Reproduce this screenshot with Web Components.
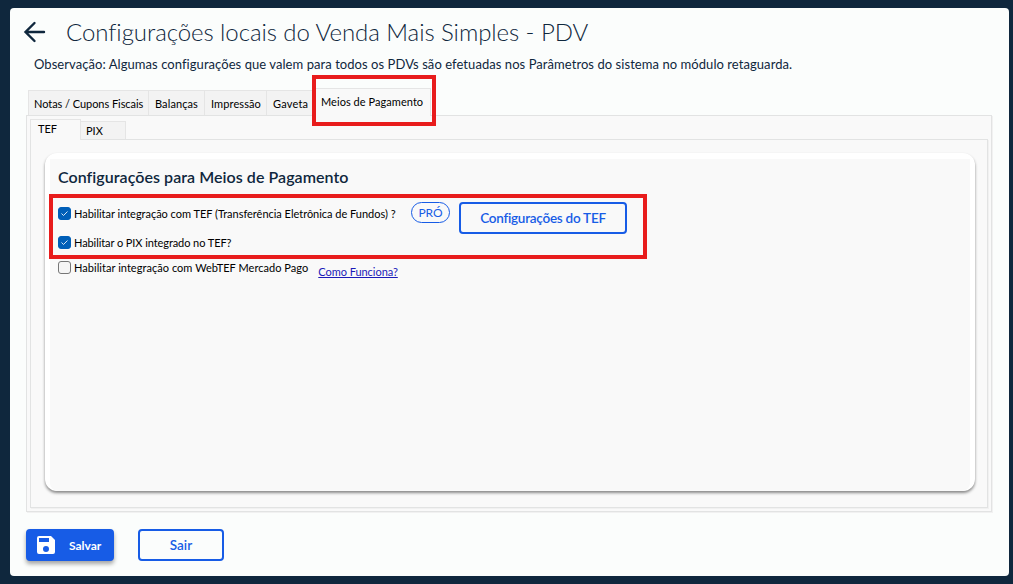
<!DOCTYPE html>
<html lang="pt-BR">
<head>
<meta charset="utf-8">
<title>Configurações locais</title>
<style>
  html, body { height: 100%; }
  body {
    margin: 0;
    background: #0f273d;
    font-family: Lato, "Open Sans", sans-serif;
    font-size: 11px;
    color: #000;
    overflow: hidden;
  }
</style>
</head>
<body>
<settings-window></settings-window>

<script>
class TabStrip extends HTMLElement {
  constructor() {
    super();
    this.attachShadow({ mode: "open" });
    this.shadowRoot.innerHTML = `
    <style>
      :host { display: flex; align-items: flex-end; position: relative; z-index: 1; }
    </style>
    <slot></slot>
    `;
  }
}

class TabItem extends HTMLElement {
  constructor() {
    super();
    this.attachShadow({ mode: "open" });
    this.shadowRoot.innerHTML = `
    <style>
      :host {
        display: block;
        box-sizing: border-box;
        width: var(--w);
        height: var(--h, 25px);
        padding: var(--pad, 5px 0 0 6px);
        background: #f3f3f3;
        border: 1px solid #e5e5e5;
        border-left-width: var(--left, 0);
        border-bottom: none;
        line-height: 15px;
        white-space: nowrap;
        letter-spacing: var(--ls, 0);
      }
      :host([active]) { background: #f9f9f9; margin-bottom: -1px; }
    </style>
    <slot></slot>
    `;
  }
}

class CheckRow extends HTMLElement {
  constructor() {
    super();
    this.attachShadow({ mode: "open" });
    this.shadowRoot.innerHTML = `
    <style>
      :host { display: flex; align-items: center; height: 15px; line-height: 15px; white-space: nowrap; letter-spacing: var(--ls, 0); }
      .box {
        box-sizing: border-box;
        width: 13px;
        height: 13px;
        margin-right: 3px;
        border: 1px solid #767676;
        border-radius: 3px;
        background: #f5f5f5;
      }
      svg { display: none; }
      :host([checked]) .box { background: #005fb8; border-color: #005fb8; }
      :host([checked]) svg { display: block; }
    </style>
    <span class="box"><svg width="11" height="11" viewBox="0 0 11 11" fill="none" stroke="#d5e6f5" stroke-width="1"><path d="M2.5 5.5l2 2 4-4"/></svg></span>
    <span><slot></slot></span>
    `;
  }
}

class AppButton extends HTMLElement {
  constructor() {
    super();
    this.attachShadow({ mode: "open" });
    this.shadowRoot.innerHTML = `
    <style>
      :host {
        display: flex;
        box-sizing: border-box;
        width: var(--w);
        height: 32px;
        padding-top: 1px;
        align-items: center;
        justify-content: center;
        border: 2px solid #175ce6;
        border-radius: 4px;
        color: #175ce6;
        font-size: 13.5px;
        line-height: 17px;
        font-weight: 600;
        white-space: nowrap;
        letter-spacing: var(--ls, 0);
      }
      :host([primary]) {
        background: #175ce6;
        color: #fff;
        font-size: 12px;
        font-weight: 700;
        justify-content: flex-start;
        padding: 0 0 0 9px;
        gap: 14px;
        box-shadow: 0 3px 4px rgba(0, 0, 0, .35);
      }
    </style>
    <slot name="icon"></slot><span><slot></slot></span>
    `;
  }
}

class SettingsCard extends HTMLElement {
  constructor() {
    super();
    this.attachShadow({ mode: "open" });
    this.shadowRoot.innerHTML = `
    <style>
      :host {
        display: block;
        box-sizing: border-box;
        height: 338px;
        padding: 6px 5px 0;
        background: #fff;
        border-radius: 12px;
        box-shadow: 0 2px 3px rgba(0, 0, 0, .45);
      }
      .body { height: 338px; margin-bottom: -6px; height: 332px; box-sizing: border-box; background: #f9f9f9; padding: 8px 0 0 8px; border-radius: 0 0 8px 8px; }
      h2 { margin: 0; font-size: 16px; line-height: 20px; font-weight: 600; color: #0f273d; letter-spacing: .05px; }
      .row { display: flex; align-items: flex-start; }
      .first { height: 32px; margin-top: 15px; }
      .first check-row { margin-top: 4px; width: 353px; }
      .pill {
        box-sizing: border-box;
        width: 39px;
        height: 21px;
        margin-right: 9px;
        border: 1px solid #175ce6;
        border-radius: 11px;
        color: #175ce6;
        font-size: 12px;
        line-height: 20px;
        text-align: center;
      }
      .second { margin-top: 1px; }
      .third { margin-top: 10px; }
      .third a { margin: 4px 0 0 10px; line-height: 15px; color: #1a1ab8; letter-spacing: -.04px; }
    </style>
    <div class="body">
      <h2>Configurações para Meios de Pagamento</h2>
      <div class="row first">
        <check-row checked style="--ls:-.02px">Habilitar integração com TEF (Transferência Eletrônica de Fundos) ?</check-row>
        <span class="pill">PRÓ</span>
        <app-button style="--w:168px;--ls:-.25px">Configurações do TEF</app-button>
      </div>
      <check-row class="second" checked style="--ls:-.08px">Habilitar o PIX integrado no TEF?</check-row>
      <div class="row third">
        <check-row style="--ls:.04px">Habilitar integração com WebTEF Mercado Pago</check-row>
        <a href="#">Como Funciona?</a>
      </div>
    </div>
    `;
  }
}

class SettingsWindow extends HTMLElement {
  constructor() {
    super();
    this.attachShadow({ mode: "open" });
    this.shadowRoot.innerHTML = `
    <style>
      :host {
        display: block;
        position: relative;
        box-sizing: border-box;
        height: 584px;
        padding: 8px 4px 8px 10px;
      }
      main {
        box-sizing: border-box;
        height: 568px;
        padding: 8px 17px 0 16px;
        background: #fbfdfc;
        border-radius: 4px;
      }
      header { display: flex; align-items: center; height: 32px; color: #0f273d; }
      header svg { margin-left: -3px; }
      h1 { margin: 0 0 0 19px; font-size: 24px; font-weight: 300; line-height: 32px; white-space: nowrap; letter-spacing: -.06px; }
      .note { margin: 7px 0 0 8px; font-size: 13px; line-height: 18px; color: #0f273d; white-space: nowrap; letter-spacing: .06px; }
      .outer-tabs { height: 27px; margin: 15px 0 0 2px; }
      .outer {
        box-sizing: border-box;
        height: 397px;
        border: 1px solid #e2e3e3;
        background: #f9f9f9;
        padding: 3px 3px 0;
        box-shadow: 1px 1px 0 #f1f1f1;
      }
      .inner-tabs { height: 20px; }
      .inner {
        box-sizing: border-box;
        height: 369px;
        border: 1px solid #e2e3e3;
        padding: 13px 12px 0 14px;
        box-shadow: 1px 1px 0 #f1f1f1;
      }
      footer { display: flex; gap: 24px; margin-top: 17px; }
      /* red highlights lie over the form */
      .mark { position: absolute; box-sizing: border-box; border: 4px solid #e81c1c; z-index: 2; }
      .mark-tab { left: 312px; top: 75px; width: 124px; height: 51px; }
      .mark-tef { left: 49px; top: 194px; width: 598px; height: 65px; }
    </style>
    <main>
      <header>
        <svg width="24" height="24" viewBox="0 0 24 24" fill="none" stroke="#0f273d" stroke-width="2.4" stroke-linecap="round"><path d="M21 12H3M11.5 3L2.5 12l9 9"/></svg>
        <h1>Configurações locais do Venda Mais Simples - PDV</h1>
      </header>
      <p class="note">Observação: Algumas configurações que valem para todos os PDVs são efetuadas nos Parâmetros do sistema no módulo retaguarda.</p>
      <tab-strip class="outer-tabs">
        <tab-item style="--w:121px;--left:1px;--pad:5px 0 0 5px;--ls:-.05px">Notas / Cupons Fiscais</tab-item>
        <tab-item style="--w:56px;--ls:.1px">Balanças</tab-item>
        <tab-item style="--w:62px;--ls:.1px">Impressão</tab-item>
        <tab-item style="--w:47px;--ls:.2px">Gaveta</tab-item>
        <tab-item active style="--w:117px;--h:28px;--pad:5px 0 0 7px;--ls:.05px">Meios de Pagamento</tab-item>
      </tab-strip>
      <section class="outer">
        <tab-strip class="inner-tabs">
          <tab-item active style="--w:51px;--h:21px;--left:1px;--pad:1px 0 0 7px">TEF</tab-item>
          <tab-item style="--w:45px;--h:18px;--pad:1px 0 0 5px">PIX</tab-item>
        </tab-strip>
        <div class="inner"><settings-card></settings-card></div>
      </section>
      <footer>
        <app-button primary style="--w:88px">
          <svg slot="icon" width="18" height="18" viewBox="0 0 18 18"><path fill="#fff" fill-rule="evenodd" d="M2 0h12l4 4v12a2 2 0 0 1-2 2H2a2 2 0 0 1-2-2V2a2 2 0 0 1 2-2zM2 2v4h10V2zM9 10a3 3 0 1 0 0 6 3 3 0 0 0 0-6z"/></svg>
          Salvar
        </app-button>
        <app-button style="--w:86px">Sair</app-button>
      </footer>
    </main>
    <div class="mark mark-tab"></div>
    <div class="mark mark-tef"></div>
    `;
  }
}

customElements.define("tab-strip", TabStrip);
customElements.define("tab-item", TabItem);
customElements.define("check-row", CheckRow);
customElements.define("app-button", AppButton);
customElements.define("settings-card", SettingsCard);
customElements.define("settings-window", SettingsWindow);
</script>
</body>
</html>
